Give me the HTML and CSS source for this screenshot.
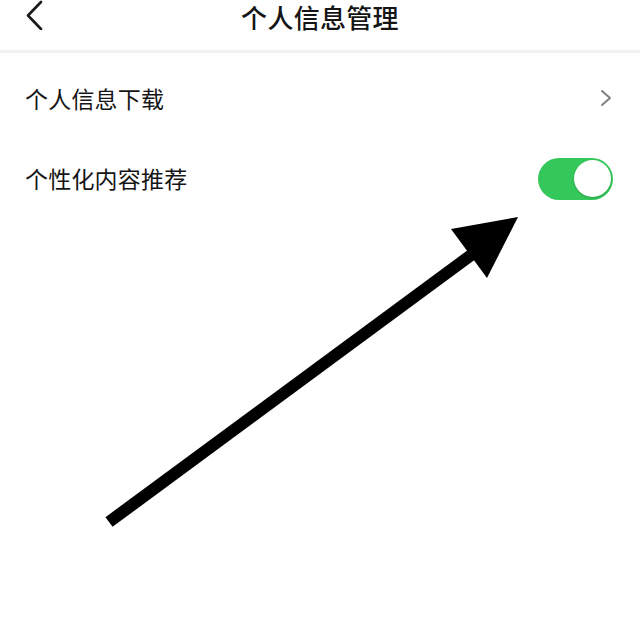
FILE: index.html
```html
<!DOCTYPE html>
<html lang="zh-CN">
<head>
<meta charset="utf-8">
<title>个人信息管理</title>
<link rel="stylesheet" href="styles.css">
</head>
<body>
<div class="page">
  <header class="header">
    <svg class="back" width="20" height="30" viewBox="0 0 20 30">
      <polyline points="16,2 3,15.5 16,29" fill="none" stroke="#1a1a1a" stroke-width="2.6" stroke-linecap="round" stroke-linejoin="round"/>
    </svg>
    <h1 class="title">个人信息管理</h1>
  </header>
  <ul class="list">
    <li class="row">
      <span class="label">个人信息下载</span>
      <svg class="chev" width="14" height="18" viewBox="0 0 14 18">
        <polyline points="3,2 11,9 3,16" fill="none" stroke="#808080" stroke-width="2" stroke-linecap="round" stroke-linejoin="round"/>
      </svg>
    </li>
    <li class="row">
      <span class="label">个性化内容推荐</span>
      <span class="toggle"><span class="knob"></span></span>
    </li>
  </ul>
  <svg class="arrow" width="640" height="641" viewBox="0 0 640 641">
    <line x1="109" y1="522" x2="478" y2="250" stroke="#000" stroke-width="12"/>
    <polygon points="518,217 451,229 487,278" fill="#000"/>
  </svg>
</div>
</body>
</html>
```
FILE: styles.css
```css
html, body {
  margin: 0;
  padding: 0;
  background: #fff;
}
body {
  font-family: "Noto Sans CJK SC", "Noto Sans", sans-serif;
  color: #151515;
}
.page {
  position: relative;
  width: 640px;
  height: 641px;
  overflow: hidden;
}
.header {
  position: relative;
  height: 34px;
  padding-bottom: 16px;
  border-bottom: 3px solid #f1f1f1;
  display: flex;
  align-items: center;
  justify-content: center;
}
.back {
  position: absolute;
  left: 25px;
  top: 0;
}
.title {
  margin: 0;
  font-size: 26px;
  font-weight: 500;
  line-height: 34px;
  letter-spacing: 0.3px;
}
.list {
  list-style: none;
  margin: 0;
  padding: 5px 0 0;
}
.row {
  height: 80px;
  display: flex;
  align-items: center;
  justify-content: space-between;
  padding: 0 27px 0 25px;
}
.label {
  font-size: 23px;
  line-height: 30px;
  letter-spacing: 0.2px;
}
.toggle {
  width: 75px;
  height: 42px;
  border-radius: 21px;
  background: #34c759;
  display: flex;
  align-items: center;
  justify-content: flex-end;
  padding: 0 2px;
  box-sizing: border-box;
  margin-top: 1px;
}
.knob {
  width: 37px;
  height: 37px;
  border-radius: 50%;
  background: #fff;
  box-shadow: 0 1px 2px rgba(0,0,0,0.2);
}
.arrow {
  position: absolute;
  left: 0;
  top: 0;
  pointer-events: none;
}
```
